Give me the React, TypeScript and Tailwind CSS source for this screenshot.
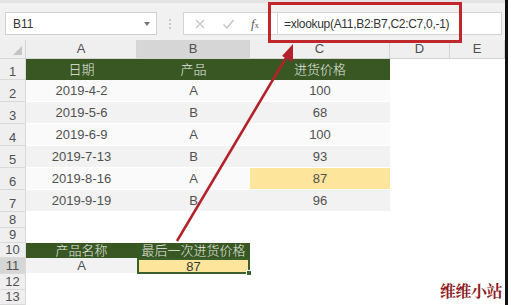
import React from 'react';

const cols = ['A', 'B', 'C', 'D', 'E'];
const font = "font-['Liberation_Sans','Noto_Sans_CJK_SC',sans-serif]";

type Cell = { text?: string; kind?: 'head' | 'band' | 'plain' | 'gold' | 'sel' };

const rows: { n: number; h: string; cells: Cell[] }[] = [
  { n: 1, h: 'h-[21px]', cells: [{ text: '日期', kind: 'head' }, { text: '产品', kind: 'head' }, { text: '进货价格', kind: 'head' }] },
  { n: 2, h: 'h-[22px]', cells: [{ text: '2019-4-2', kind: 'plain' }, { text: 'A', kind: 'plain' }, { text: '100', kind: 'plain' }] },
  { n: 3, h: 'h-[22px]', cells: [{ text: '2019-5-6', kind: 'band' }, { text: 'B', kind: 'band' }, { text: '68', kind: 'band' }] },
  { n: 4, h: 'h-[22px]', cells: [{ text: '2019-6-9', kind: 'plain' }, { text: 'A', kind: 'plain' }, { text: '100', kind: 'plain' }] },
  { n: 5, h: 'h-[22px]', cells: [{ text: '2019-7-13', kind: 'band' }, { text: 'B', kind: 'band' }, { text: '93', kind: 'band' }] },
  { n: 6, h: 'h-[22px]', cells: [{ text: '2019-8-16', kind: 'plain' }, { text: 'A', kind: 'plain' }, { text: '87', kind: 'gold' }] },
  { n: 7, h: 'h-[22px]', cells: [{ text: '2019-9-19', kind: 'band' }, { text: 'B', kind: 'band' }, { text: '96', kind: 'band' }] },
  { n: 8, h: 'h-[16px]', cells: [] },
  { n: 9, h: 'h-[15px]', cells: [] },
  { n: 10, h: 'h-[15px]', cells: [{ text: '产品名称', kind: 'head' }, { text: '最后一次进货价格', kind: 'head' }] },
  { n: 11, h: 'h-[16px]', cells: [{ text: 'A', kind: 'band' }, { text: '87', kind: 'sel' }] },
  { n: 12, h: 'h-[16px]', cells: [] },
  { n: 13, h: 'h-[15px]', cells: [] },
];

const cellClass: Record<string, string> = {
  head: 'bg-[#385723] text-[#e6eae2] font-light',
  band: 'bg-[#f2f2f2] text-[#505050] border-b border-white',
  plain: 'bg-[#fafafa] text-[#505050] border-b border-white',
  gold: 'bg-[#fde59b] text-[#505050] border-b border-white',
  sel: 'bg-[#fde59b] text-[#383838] border-2 border-[#3b5f2b] relative',
};

function Grid() {
  return (
    <div className="grid grid-cols-[26px_111px_113px_140px_60px_55px]">
      {/* column headers */}
      <div className="h-[19px] bg-[#efefef] border-r border-b border-[#d4d4d4] flex items-end justify-end pr-[3px] pb-[3px]">
        <div className="w-0 h-0 border-l-[9px] border-l-transparent border-b-[9px] border-b-[#c4c4c4]" />
      </div>
      {cols.map((c) => (
        <div
          key={c}
          className={`h-[19px] border-r border-b border-[#d4d4d4] flex items-center justify-center text-[13px] text-[#505050] ${
            c === 'B' ? 'bg-[#d6d6d6]' : 'bg-[#efefef]'
          }`}
        >
          {c}
        </div>
      ))}
      {rows.map((r) => (
        <React.Fragment key={r.n}>
          <div
            className={`${r.h} border-r border-b border-[#dadada] flex items-end justify-center text-[13px] leading-none pb-[1px] text-[#505050] ${
              r.n === 11 ? 'bg-[#d6d6d6]' : 'bg-[#efefef]'
            }`}
          >
            {r.n}
          </div>
          {[0, 1, 2, 3, 4].map((i) => {
            const cell = r.cells[i];
            if (!cell) return <div key={i} className={`${r.h} bg-white`} />;
            return (
              <div
                key={i}
                className={`${r.h} flex items-center justify-center text-[13px] leading-none ${cellClass[cell.kind!]}`}
              >
                {cell.text}
                {cell.kind === 'sel' && (
                  <span className="absolute -right-[4px] -bottom-[4px] w-[6px] h-[6px] bg-[#3b5f2b] border border-white" />
                )}
              </div>
            );
          })}
        </React.Fragment>
      ))}
    </div>
  );
}

function Toolbar() {
  return (
    <div className="h-[40px] bg-[#f1f1f1] border-t-[3px] border-[#e4e4e4] flex items-start pt-[9px] pl-[5px]">
      <div className="w-[152px] h-[23px] bg-white border border-[#cfcfcf] flex items-center justify-between pl-[7px] pr-[6px]">
        <span className="text-[12px] text-[#333]">B11</span>
        <span className="w-0 h-0 border-l-[3px] border-r-[3px] border-t-[4px] border-l-transparent border-r-transparent border-t-[#777]" />
      </div>
      <div className="w-[26px] h-[23px] flex flex-col items-center justify-center gap-[2px]">
        <span className="w-[2px] h-[2px] bg-[#c8c8c8]" />
        <span className="w-[2px] h-[2px] bg-[#c8c8c8]" />
        <span className="w-[2px] h-[2px] bg-[#c8c8c8]" />
      </div>
      <div className="flex-1 h-[23px] bg-white border border-[#d4d4d4] flex items-center">
        <div className="w-[93px] flex items-center pl-[10px] gap-[16px]">
          <svg width="12" height="12" viewBox="0 0 12 12" className="shrink-0">
            <path d="M2 2 L10 10 M10 2 L2 10" stroke="#c4c4c4" strokeWidth="1.3" />
          </svg>
          <svg width="13" height="12" viewBox="0 0 13 12" className="shrink-0">
            <path d="M1.5 6.5 L5 10 L11.5 2" stroke="#c4c4c4" strokeWidth="1.4" fill="none" />
          </svg>
          <span className="font-['Liberation_Serif',serif] italic text-[13px] text-[#555] leading-none">
            f<span className="text-[8px] not-italic">x</span>
          </span>
        </div>
        <div className="h-full border-l border-[#d4d4d4] flex-1 flex items-center pl-[6px]">
          <span className="text-[12px] tracking-[-0.3px] text-[#333]">=xlookup(A11,B2:B7,C2:C7,0,-1)</span>
        </div>
      </div>
      <div className="w-[3px]" />
    </div>
  );
}

export default function App() {
  return (
    <div className={`relative w-[511px] h-[305px] overflow-hidden bg-white ${font}`}>
      <div className="flex w-[511px]">
        <div className="w-[505px] flex flex-col">
          <Toolbar />
          <Grid />
        </div>
        <div className="w-[3px] h-[305px] bg-[#111]" />
        <div className="w-[3px] bg-white" />
      </div>

      {/* red highlight box round the formula */}
      <div className="absolute left-[268px] top-[2px] w-[194px] h-[41px] border-[3px] border-[#c2262d]" />

      {/* arrow from B10 up to the formula */}
      <svg className="absolute inset-0 pointer-events-none" width="511" height="305">
        <line x1="177" y1="241" x2="287" y2="56" stroke="#b3222b" strokeWidth="2.5" />
        <polygon points="293,44 282,56 293,62" fill="#b3222b" />
      </svg>

      <div className="absolute left-[440px] top-[283px] text-[16px] font-bold leading-none text-[#8e1b1f] font-['Noto_Serif_CJK_SC','Noto_Sans_CJK_SC',serif] tracking-[-0.5px]">
        维维小站
      </div>
    </div>
  );
}
